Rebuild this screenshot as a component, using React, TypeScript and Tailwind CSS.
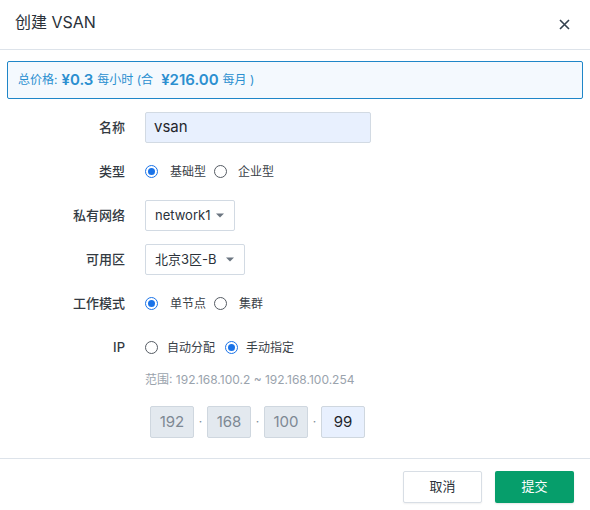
import React from "react";

const font = { fontFamily: 'Inter, "Noto Sans CJK SC", sans-serif' };

function Radio({ checked, className = "" }: { checked: boolean; className?: string }) {
  return checked ? (
    <div className={"w-[13px] h-[13px] rounded-full border border-[#1a73e8] flex items-center justify-center shrink-0 " + className}>
      <div className="w-[7px] h-[7px] rounded-full bg-[#1a73e8]" />
    </div>
  ) : (
    <div className={"w-[13px] h-[13px] rounded-full border border-[#555b63] shrink-0 " + className} />
  );
}

function Row({ label, children }: { label: string; children: React.ReactNode }) {
  return (
    <div className="flex items-center h-[31px]">
      <div className="w-[125px] text-right text-[13px] text-[#333a42] font-medium shrink-0">{label}</div>
      <div className="ml-[20px] flex items-center h-full">{children}</div>
    </div>
  );
}

function Arrow() {
  return (
    <svg width="8" height="5" viewBox="0 0 8 5" className="shrink-0">
      <path d="M0 0.5 L8 0.5 L4 4.5 Z" fill="#6b7580" />
    </svg>
  );
}

export default function App() {
  return (
    <div className="w-[590px] h-[510px] bg-white flex flex-col text-[#333a42]" style={font}>
      <div className="h-[50px] flex items-center justify-between pl-[15px] pr-[20px] border-b border-[#dde3ea] shrink-0">
        <div className="text-[16px] text-[#2a3139] -mt-[5px]">创建 VSAN</div>
        <svg width="11" height="11" viewBox="0 0 11 11">
          <path d="M1 1 L10 10 M10 1 L1 10" stroke="#33414f" strokeWidth="1.6" />
        </svg>
      </div>
      <div className="mx-[7px] mt-[11px] h-[38px] border border-[#1f86c8] bg-[#f4f9fe] rounded-[2px] flex items-center pl-[10px] text-[12px] text-[#2b8fd0] shrink-0">
        <span>总价格:</span>
        <span className="ml-[4px] text-[15px] font-semibold">¥0.3</span>
        <span className="ml-[4px]">每小时 (合</span>
        <span className="ml-[8px] text-[15px] font-semibold">¥216.00</span>
        <span className="ml-[4px]">每月 )</span>
      </div>
      <div className="flex flex-col gap-[13px] mt-[13px]">
        <Row label="名称">
          <div className="w-[226px] h-[31px] bg-[#e8f0fe] border border-[#d2dae3] rounded-[2px] flex items-center pl-[8px] text-[15px] text-[#1f252b]">
            vsan
          </div>
        </Row>
        <Row label="类型">
          <div className="flex items-center text-[12px] text-[#3a4148]">
            <Radio checked />
            <span className="ml-[12px]">基础型</span>
            <Radio checked={false} className="ml-[8px]" />
            <span className="ml-[11px]">企业型</span>
          </div>
        </Row>
        <Row label="私有网络">
          <div className="w-[90px] h-[31px] border border-[#d2dae3] rounded-[2px] flex items-center justify-between pl-[9px] pr-[10px] text-[13px] text-[#2a3139]">
            <span>network1</span>
            <Arrow />
          </div>
        </Row>
        <Row label="可用区">
          <div className="w-[100px] h-[31px] border border-[#d2dae3] rounded-[2px] flex items-center justify-between pl-[9px] pr-[10px] text-[13px] text-[#2a3139]">
            <span>北京3区-B</span>
            <Arrow />
          </div>
        </Row>
        <Row label="工作模式">
          <div className="flex items-center text-[12px] text-[#3a4148]">
            <Radio checked />
            <span className="ml-[12px]">单节点</span>
            <Radio checked={false} className="ml-[8px]" />
            <span className="ml-[12px]">集群</span>
          </div>
        </Row>
        <Row label="IP">
          <div className="flex items-center text-[12px] text-[#3a4148]">
            <Radio checked={false} />
            <span className="ml-[9px]">自动分配</span>
            <Radio checked className="ml-[10px]" />
            <span className="ml-[8px]">手动指定</span>
          </div>
        </Row>
      </div>
      <div className="ml-[145px] mt-[9px] text-[12px] text-[#9aa3ad] leading-[16px]">
        范围: 192.168.100.2 ~ 192.168.100.254
      </div>
      <div className="ml-[150px] mt-[18px] flex items-center">
        {["192", "168", "100"].map((v) => (
          <React.Fragment key={v}>
            <div className="w-[44px] h-[32px] bg-[#e3e9ef] border border-[#cfd7df] rounded-[2px] flex items-center justify-center text-[15px] text-[#7d8893]">
              {v}
            </div>
            <div className="w-[13px] text-center text-[12px] text-[#7d8893]">·</div>
          </React.Fragment>
        ))}
        <div className="w-[44px] h-[32px] bg-[#e8f0fe] border border-[#cfd7df] rounded-[2px] flex items-center justify-center text-[15px] text-[#1f252b]">
          99
        </div>
      </div>
      <div className="mt-[20px] border-t border-[#dde3ea] flex justify-end gap-[13px] pr-[16px] pt-[12px]">
        <button className="w-[79px] h-[32px] border border-[#d8dee5] rounded-[2px] bg-white text-[13px] text-[#2a3139] shadow-[0_1px_2px_rgba(0,0,0,0.06)]">
          取消
        </button>
        <button className="w-[79px] h-[32px] rounded-[2px] bg-[#069e6b] text-[13px] text-white shadow-[0_1px_2px_rgba(0,0,0,0.1)]">
          提交
        </button>
      </div>
    </div>
  );
}
